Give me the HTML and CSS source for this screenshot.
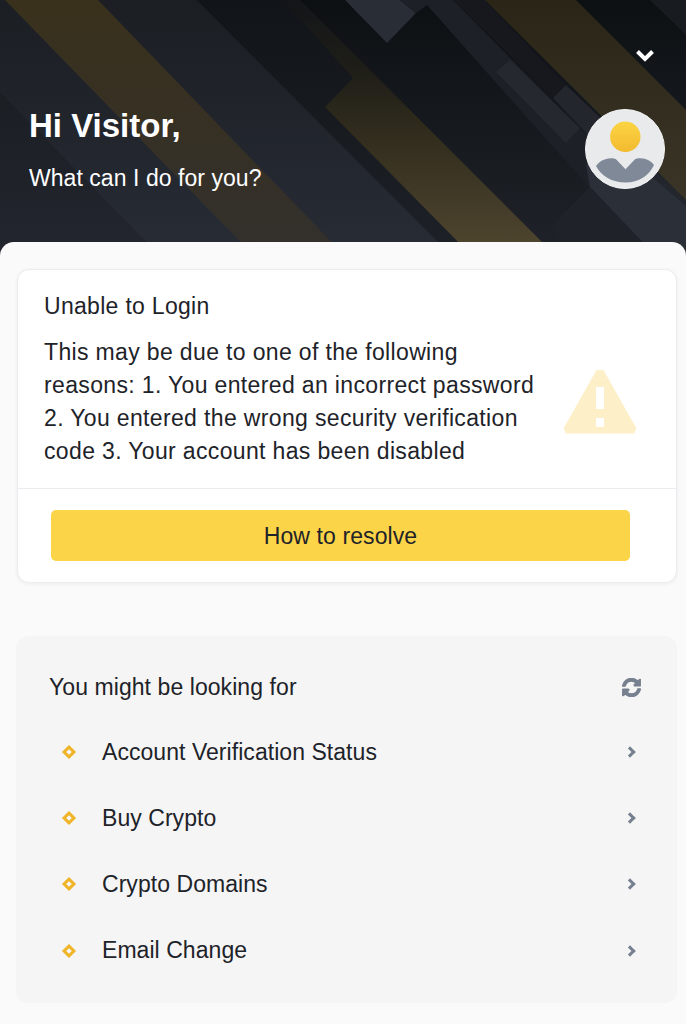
FILE: index.html
```html
<!DOCTYPE html>
<html lang="en">
<head>
<meta charset="utf-8">
<title>Help Center</title>
<link rel="stylesheet" href="styles.css">
</head>
<body>
<header class="hero">
  <svg class="hero-art" viewBox="0 0 686 256" preserveAspectRatio="none" aria-hidden="true">
    <defs>
      <linearGradient id="heroBase" gradientUnits="userSpaceOnUse" x1="0" y1="0" x2="0" y2="242">
        <stop offset="0" stop-color="#1b1e23"/>
        <stop offset="1" stop-color="#272b34"/>
      </linearGradient>
      <linearGradient id="heroLow" gradientUnits="userSpaceOnUse" x1="0" y1="90" x2="0" y2="242">
        <stop offset="0" stop-color="#1b1e23"/>
        <stop offset="1" stop-color="#22252d"/>
      </linearGradient>
      <linearGradient id="goldBand" gradientUnits="userSpaceOnUse" x1="0" y1="0" x2="0" y2="242">
        <stop offset="0" stop-color="#3a311c"/>
        <stop offset="1" stop-color="#33302c"/>
      </linearGradient>
      <linearGradient id="goldDeep" gradientUnits="userSpaceOnUse" x1="0" y1="0" x2="0" y2="242">
        <stop offset="0" stop-color="#131518"/>
        <stop offset=".3" stop-color="#1f1e18"/>
        <stop offset=".55" stop-color="#312c1d"/>
        <stop offset="1" stop-color="#4d442e"/>
      </linearGradient>
      <linearGradient id="goldRight" gradientUnits="userSpaceOnUse" x1="0" y1="0" x2="0" y2="200">
        <stop offset="0" stop-color="#2a2517"/>
        <stop offset="1" stop-color="#3b3528"/>
      </linearGradient>
      <linearGradient id="darkBand" gradientUnits="userSpaceOnUse" x1="0" y1="0" x2="0" y2="242">
        <stop offset="0" stop-color="#0d1013"/>
        <stop offset="1" stop-color="#1e2228"/>
      </linearGradient>
      <linearGradient id="shadeBand" gradientUnits="userSpaceOnUse" x1="0" y1="0" x2="0" y2="242">
        <stop offset="0" stop-color="#111418"/>
        <stop offset="1" stop-color="#1d2026"/>
      </linearGradient>
    </defs>
    <rect width="686" height="256" fill="url(#heroBase)"/>
    <polygon points="0,92 160,256 0,256" fill="url(#heroLow)"/>
    <polygon points="5,0 98,0 345,256 254,256" fill="url(#goldBand)"/>
    <!-- dark field behind the right half -->
    <polygon points="197,0 686,0 686,256 452,256" fill="url(#darkBand)"/>
    <polygon points="197,0 283,0 353,78 325,107 472,256 452,256" fill="url(#shadeBand)"/>
    <polygon points="283,0 300,0 556,256 472,256 325,107 353,78" fill="url(#goldDeep)"/>
    <polygon points="345,0 400,0 416,13 387,43" fill="#292d36"/>
    <!-- slate strips running to the lower right -->
    <polygon points="400,0 453,0 686,236 686,256 650,256 427,5 416,13" fill="#1d2026"/>
    <polygon points="496,72 510,60 580,128 566,143" fill="#25282f"/>
    <polygon points="453,0 485,0 566,85 553,98" fill="#16181e"/>
    <polygon points="553,98 566,85 686,200 686,240" fill="#23262d"/>
    <polygon points="586,165 590,187 640,240 655,256 686,256 686,206 620,150" fill="#2b2f38"/>
    <polygon points="485,0 576,0 686,110 686,200" fill="url(#goldRight)"/>
    <polygon points="590,187 550,227 579,256 656,256" fill="#1f2228"/>
    <polygon points="650,0 686,0 686,35" fill="#181b20"/>
  </svg>
  <button class="collapse" type="button" aria-label="Collapse">
    <svg viewBox="0 0 20 16" width="20" height="16"><path d="M2.500 3.500 10 11l7.500-7.500" fill="none" stroke="#fff" stroke-width="4"/></svg>
  </button>
  <div class="hero-body">
    <div class="greeting">
      <h1>Hi Visitor,</h1>
      <p>What can I do for you?</p>
    </div>
    <svg class="avatar" viewBox="0 0 80 80" width="80" height="80" aria-hidden="true">
      <defs>
        <linearGradient id="headFill" x1="0" y1="0" x2="0" y2="1">
          <stop offset="0" stop-color="#fbd444"/>
          <stop offset="1" stop-color="#f3ba2f"/>
        </linearGradient>
      </defs>
      <circle cx="40" cy="40" r="39.500" fill="#e9eaec" stroke="#f6f6f7" stroke-width="1"/>
      <circle cx="40.300" cy="27.700" r="15.200" fill="url(#headFill)"/>
      <path d="M11 57c3-4 8-7.700 15-7.700 3 0 4.500.5 5.500 1.500l9 9.500 9-9.500c1-1 2.500-1.500 5.500-1.500 7 0 11 3 14 6.700-5 10.500-15 17.500-28.500 17.500S16 67 11 57z" fill="#7f8998"/>
    </svg>
  </div>
</header>

<main class="sheet">
  <section class="notice">
    <div class="notice-body">
      <div class="notice-text">
        <h2>Unable to Login</h2>
        <p>This may be due to one of the following reasons: 1. You entered an incorrect password 2. You entered the wrong security verification code 3. Your account has been disabled</p>
      </div>
      <svg class="warn" viewBox="0 0 74 66" width="74" height="66" aria-hidden="true">
        <path d="M33.500 1h7l33 58.500-2.500 5H3L.5 59.500z" fill="#fdf0c9"/>
        <rect x="33" y="18" width="8" height="22" fill="#fff"/>
        <rect x="33" y="49" width="8" height="9" fill="#fff"/>
      </svg>
    </div>
    <div class="notice-action">
      <button class="resolve" type="button">How to resolve</button>
    </div>
  </section>

  <section class="suggest">
    <div class="suggest-head">
      <span>You might be looking for</span>
      <svg class="refresh" viewBox="0 0 512 512" width="19" height="19" aria-hidden="true">
        <path d="M370.720 133.280C339.458 104.008 298.888 87.962 255.848 88c-77.458.068-144.328 53.178-162.791 126.850-1.344 5.363-6.122 9.150-11.651 9.150H24.103c-7.498 0-13.194-6.807-11.807-14.176C33.933 94.924 134.813 8 256 8c66.448 0 126.791 26.136 171.315 68.685L463.030 40.970C478.149 25.851 504 36.559 504 57.941V192c0 13.255-10.745 24-24 24H345.941c-21.382 0-32.090-25.851-16.971-40.971l41.750-41.749zM32 296h134.059c21.382 0 32.090 25.851 16.971 40.971l-41.750 41.750c31.262 29.273 71.835 45.319 114.876 45.280 77.418-.07 144.315-53.144 162.787-126.849 1.344-5.363 6.122-9.150 11.651-9.150h57.304c7.498 0 13.194 6.807 11.807 14.176C478.067 417.076 377.187 504 256 504c-66.448 0-126.791-26.136-171.315-68.685L48.970 471.030C33.851 486.149 8 475.441 8 454.059V320c0-13.255 10.745-24 24-24z"/>
      </svg>
    </div>
    <ul class="topics">
      <li class="topic"><i class="bullet"></i><span>Account Verification Status</span><i class="arrow"></i></li>
      <li class="topic"><i class="bullet"></i><span>Buy Crypto</span><i class="arrow"></i></li>
      <li class="topic"><i class="bullet"></i><span>Crypto Domains</span><i class="arrow"></i></li>
      <li class="topic"><i class="bullet"></i><span>Email Change</span><i class="arrow"></i></li>
    </ul>
  </section>
</main>
</body>
</html>
```
FILE: styles.css
```css
* { box-sizing: border-box; }

html, body {
  margin: 0;
  padding: 0;
}

body {
  width: 686px;
  height: 1024px;
  overflow: hidden;
  background: #fafafa;
  color: #1e2329;
  font-family: "Liberation Sans", Arial, sans-serif;
}

.hero {
  position: relative;
  height: 256px;
  padding: 43px 21px 0 29px;
  color: #fff;
  overflow: hidden;
}

.hero-art {
  position: absolute;
  inset: 0;
  width: 100%;
  height: 100%;
}

.collapse {
  position: absolute;
  top: 48px;
  right: 31px;
  display: flex;
  padding: 0;
  border: 0;
  background: none;
}

.hero-body {
  position: relative;
  display: flex;
  justify-content: space-between;
  align-items: flex-start;
  margin-top: 66px;
}

.greeting {
  padding-top: 1px;
}

.greeting h1 {
  margin: 0;
  font-size: 33px;
  line-height: 32px;
  font-weight: 700;
}

.greeting p {
  margin: 22px 0 0;
  font-size: 23px;
  line-height: 28px;
  letter-spacing: .05px;
}

.sheet {
  position: relative;
  margin-top: -14px;
  height: 782px;
  padding: 27px 9px 0 16px;
  background: #fafafa;
  border-radius: 14px 14px 0 0;
}

.notice {
  margin-left: 1px;
  height: 314px;
  background: #fff;
  border: 1px solid #eaecef;
  border-radius: 12px;
  box-shadow: 0 1px 4px rgba(0, 0, 0, .06);
}

.notice-body {
  display: flex;
  align-items: flex-start;
  height: 219px;
  padding: 20px 39px 0 26px;
  border-bottom: 1px solid #eaecef;
}

.notice-text {
  width: 493px;
}

.notice-text h2 {
  margin: 0;
  font-size: 23px;
  line-height: 33px;
  font-weight: 400;
  letter-spacing: .3px;
}

.notice-text p {
  margin: 13px 0 0;
  font-size: 23px;
  line-height: 33px;
  letter-spacing: .35px;
}

.warn {
  flex: none;
  margin: 79px 0 0 auto;
}

.notice-action {
  padding: 21px 46px 0 33px;
}

.resolve {
  display: block;
  width: 100%;
  height: 51px;
  padding: 2px 0 0;
  border: 0;
  border-radius: 5px;
  background: #fcd448;
  color: #1e2329;
  font: 400 23px/49px "Liberation Sans", Arial, sans-serif;
  letter-spacing: .1px;
}

.suggest {
  height: 367px;
  margin-top: 53px;
  padding: 0 36px 0 33px;
  background: #f5f5f5;
  border-radius: 12px;
}

.suggest-head {
  display: flex;
  justify-content: space-between;
  align-items: center;
  height: 36px;
  position: relative;
  top: 33px;
  font-size: 23px;
  letter-spacing: .07px;
}

.refresh {
  fill: #76808f;
  stroke: #76808f;
  stroke-width: 28px;
}

.topics {
  list-style: none;
  margin: 0;
  padding: 47px 0 0;
}

.topic {
  display: flex;
  align-items: center;
  height: 66.200px;
  font-size: 23px;
  letter-spacing: .05px;
}

.bullet {
  flex: none;
  width: 10px;
  height: 10px;
  margin: 0 28px 0 15px;
  border: 3px solid #f0b429;
  transform: rotate(45deg);
}

.arrow {
  flex: none;
  width: 8px;
  height: 8px;
  margin: 0 7px 0 auto;
  border-top: 3px solid #76808f;
  border-right: 3px solid #76808f;
  transform: rotate(45deg);
}
```
